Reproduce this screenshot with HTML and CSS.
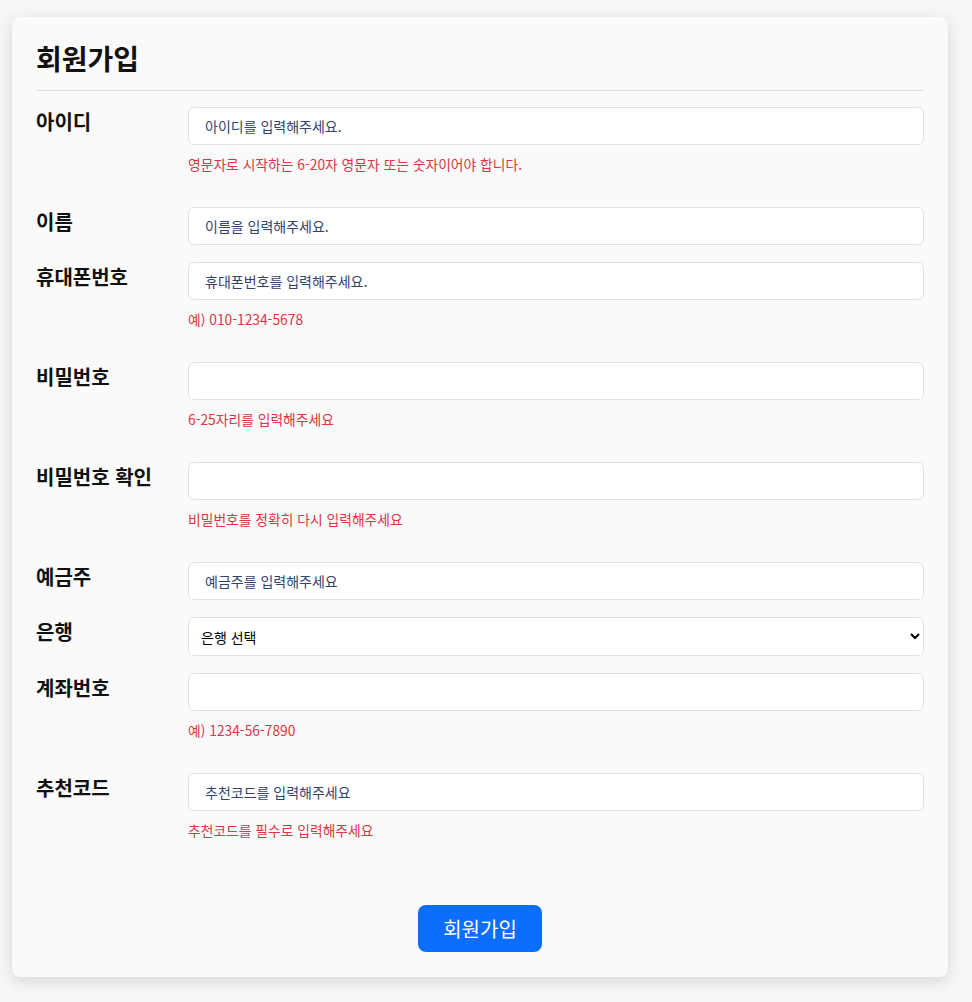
FILE: index.html
```html
<!DOCTYPE html>
<html lang="ko">
<head>
    <meta charset="UTF-8">
    <meta name="viewport" content="width=device-width, initial-scale=1.0">
    <title>회원가입</title>
    <link rel="stylesheet" href="styles.css">
</head>
<body>
    <div class="signup-card">
        <h1 class="signup-title">회원가입</h1>

        <form class="signup-form">
            <div class="form-row">
                <label class="form-label" for="userid">아이디</label>
                <div class="form-field">
                    <input class="form-input" type="text" id="userid" placeholder="아이디를 입력해주세요.">
                    <p class="form-help">영문자로 시작하는 6-20자 영문자 또는 숫자이어야 합니다.</p>
                </div>
            </div>

            <div class="form-row">
                <label class="form-label" for="name">이름</label>
                <div class="form-field">
                    <input class="form-input" type="text" id="name" placeholder="이름을 입력해주세요.">
                </div>
            </div>

            <div class="form-row">
                <label class="form-label" for="phone">휴대폰번호</label>
                <div class="form-field">
                    <input class="form-input" type="text" id="phone" placeholder="휴대폰번호를 입력해주세요.">
                    <p class="form-help">예) 010-1234-5678</p>
                </div>
            </div>

            <div class="form-row">
                <label class="form-label" for="pw">비밀번호</label>
                <div class="form-field">
                    <input class="form-input" type="password" id="pw">
                    <p class="form-help">6-25자리를 입력해주세요</p>
                </div>
            </div>

            <div class="form-row">
                <label class="form-label" for="pw2">비밀번호 확인</label>
                <div class="form-field">
                    <input class="form-input" type="password" id="pw2">
                    <p class="form-help">비밀번호를 정확히 다시 입력해주세요</p>
                </div>
            </div>

            <div class="form-row">
                <label class="form-label" for="holder">예금주</label>
                <div class="form-field">
                    <input class="form-input" type="text" id="holder" placeholder="예금주를 입력해주세요">
                </div>
            </div>

            <div class="form-row">
                <label class="form-label" for="bank">은행</label>
                <div class="form-field">
                    <select class="form-select" id="bank">
                        <option>은행 선택</option>
                    </select>
                </div>
            </div>

            <div class="form-row">
                <label class="form-label" for="account">계좌번호</label>
                <div class="form-field">
                    <input class="form-input" type="text" id="account">
                    <p class="form-help">예) 1234-56-7890</p>
                </div>
            </div>

            <div class="form-row">
                <label class="form-label" for="code">추천코드</label>
                <div class="form-field">
                    <input class="form-input" type="text" id="code" placeholder="추천코드를 입력해주세요">
                    <p class="form-help">추천코드를 필수로 입력해주세요</p>
                </div>
            </div>

            <div class="form-actions">
                <button class="btn-submit" type="button">회원가입</button>
            </div>
        </form>
    </div>
</body>
</html>
```

FILE: styles.css
```css
body {
    margin: 0;
    padding: 17px 24px 25px 12px;
    background: #f7f7f7;
    font-family: "Noto Sans CJK KR", "Noto Sans", sans-serif;
    color: #111;
}
.signup-card {
    width: 888px;
    background: #fafafa;
    border-radius: 8px;
    padding: 24px 24px 25px;
    box-shadow: 0 4px 16px rgba(0,0,0,0.14);
}
.signup-title {
    font-size: 28px;
    font-weight: 700;
    line-height: 35px;
    margin: 0;
    padding-bottom: 14px;
    border-bottom: 1px solid #dcdcdc;
}
.signup-form {
    padding-top: 16px;
}
.form-row {
    display: grid;
    grid-template-columns: 152px 1fr;
    margin-bottom: 17px;
}
.form-label {
    font-size: 20px;
    font-weight: 700;
    line-height: 27px;
    padding-top: 1px;
}
.form-input,
.form-select {
    display: block;
    width: 100%;
    box-sizing: border-box;
    height: 38px;
    border: 1px solid #dee2e6;
    border-radius: 6px;
    background: #fff;
    font-family: inherit;
    font-size: 14px;
    padding: 0 16px;
    color: #2f3e66;
}
.form-input::placeholder {
    color: #34436b;
}
.form-select {
    height: 39px;
    font-size: 14px;
    padding: 0 6px 0 8px;
    color: #000;
}
.form-help {
    margin: 9px 0 16px;
    font-size: 13.8px;
    line-height: 20px;
    color: #dc3545;
}
.form-actions {
    text-align: center;
    padding-top: 32px;
}
.btn-submit {
    background: #0d6efd;
    color: #fff;
    border: none;
    border-radius: 8px;
    font-family: inherit;
    font-size: 20px;
    line-height: 27px;
    padding: 10px 25px;
    cursor: pointer;
}
```
